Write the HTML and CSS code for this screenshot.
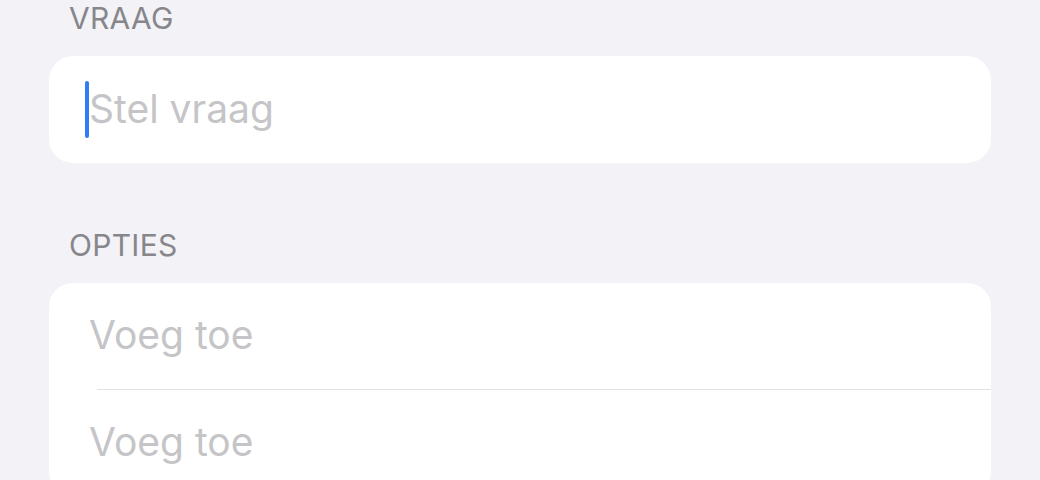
FILE: index.html
```html
<!DOCTYPE html>
<html lang="nl">
<head>
    <meta charset="UTF-8">
    <meta name="viewport" content="width=device-width, initial-scale=1.0">
    <title>Nieuwe peiling</title>
    <link rel="stylesheet" href="styles.css">
</head>
<body>

    <section class="form">
        <!-- Vraag -->
        <div class="label">VRAAG</div>
        <div class="card">
            <div class="row row-question">
                <span class="caret"></span>
                <span class="placeholder">Stel vraag</span>
            </div>
        </div>

        <!-- Opties -->
        <div class="label label-options">OPTIES</div>
        <div class="card">
            <div class="row row-option">
                <span class="placeholder">Voeg toe</span>
            </div>
            <div class="divider"></div>
            <div class="row row-option">
                <span class="placeholder">Voeg toe</span>
            </div>
        </div>
    </section>

</body>
</html>
```

FILE: styles.css
```css
/* reset */
*{
    padding: 0;
    margin: 0;
    box-sizing: border-box;
}

body{
    background: #f2f2f7;
    font-family: Inter, "Liberation Sans", sans-serif;
    height: 480px;
    overflow: hidden;
}

.form{
    padding: 0 49px;
}

/* section headers */
.label{
    font-size: 30px;
    line-height: 36px;
    letter-spacing: 0.3px;
    color: #86868b;
    padding-left: 20px;
    margin-bottom: 20px;
}

.label-options{
    margin-top: 64px;
}

/* white grouped card */
.card{
    background: #fff;
    border-radius: 24px;
    overflow: hidden;
}

.row{
    display: flex;
    align-items: center;
    padding-left: 40px;
    padding-bottom: 3px;
}

.row-question{
    height: 107px;
    padding-left: 36px;
}

.row-option{
    height: 106px;
}

.divider{
    height: 1px;
    margin-left: 48px;
    background: #e1e1e5;
}

.placeholder{
    font-size: 39px;
    color: #c5c5c8;
}

/* text cursor */
.caret{
    width: 4px;
    height: 57px;
    border-radius: 2px;
    background: #2f7cf6;
    margin-top: 3px;
}
```
